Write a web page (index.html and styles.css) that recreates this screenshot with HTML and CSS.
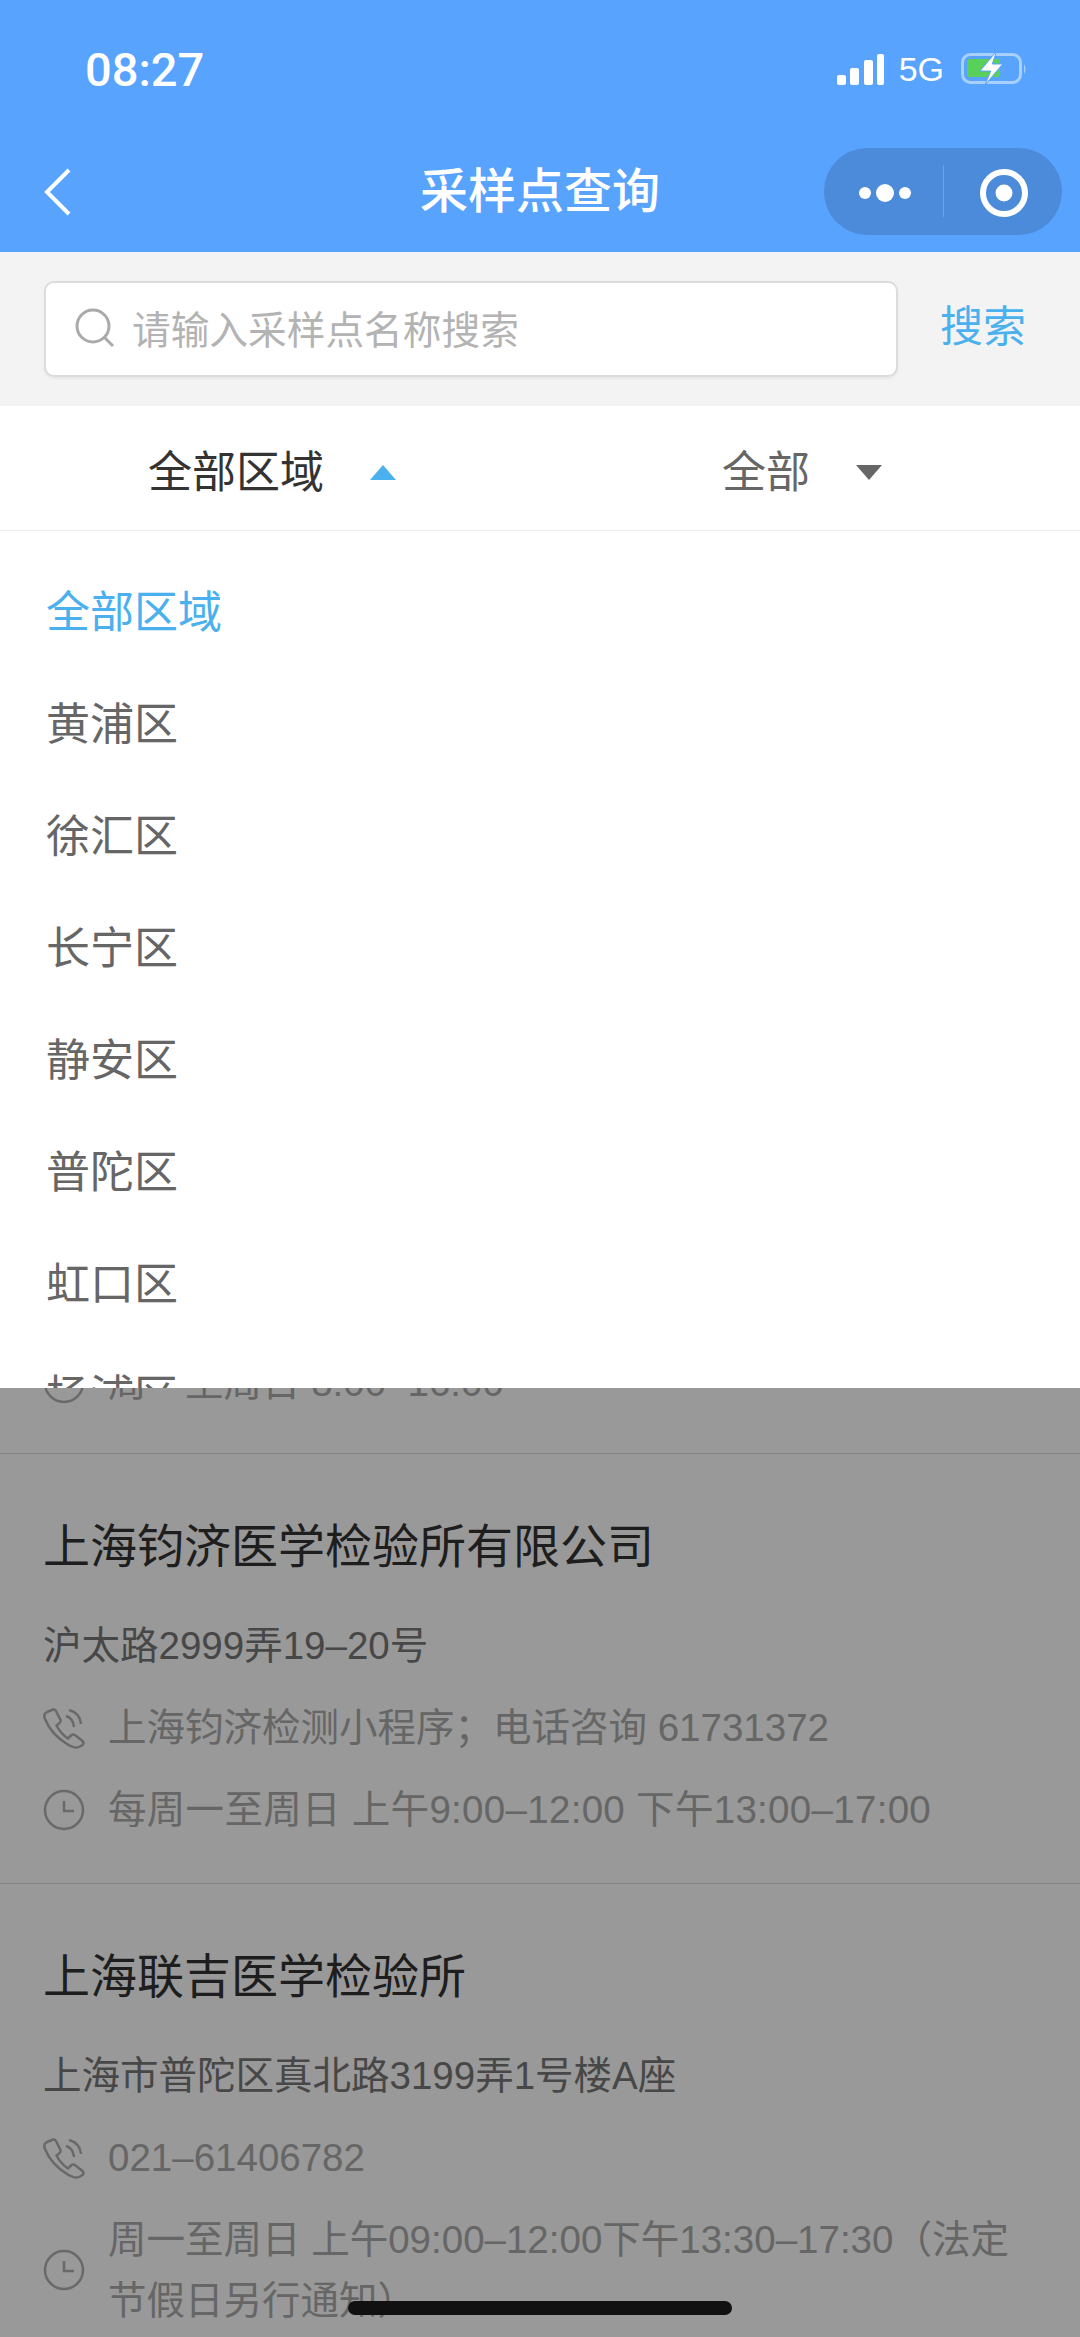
FILE: index.html
```html
<!DOCTYPE html>
<html lang="zh-CN">
<head>
  <meta charset="UTF-8">
  <meta name="viewport" content="width=device-width,initial-scale=1">
  <title>采样点查询</title>
  <link rel="stylesheet" href="styles.css">
</head>
<body>
  <div class="app">
    <header class="top">
      <div class="status">
        <span class="time">08:27</span>
        <div class="status-right">
          <svg class="signal" width="47" height="31" viewBox="0 0 47 31">
            <rect x="0" y="21" width="9" height="10" rx="2"/>
            <rect x="13" y="14" width="9" height="17" rx="2"/>
            <rect x="27" y="6" width="9" height="25" rx="2"/>
            <rect x="40" y="0" width="7" height="31" rx="2"/>
          </svg>
          <span class="net">5G</span>
          <svg class="battery" width="70" height="36" viewBox="0 0 70 36">
            <rect x="4.5" y="3.5" width="58" height="28" rx="8" fill="none" stroke="#a9cffc" stroke-width="3"/>
            <rect x="9" y="8" width="33" height="18" rx="2" fill="#58d05a"/>
            <path d="M66 13 Q69 18 66 23 Z" fill="#a9cffc"/>
            <path d="M38.7 0 L22 20 H32.7 L27 34 L44.7 13 H34.3 Z" fill="#fff" stroke="#57a3fd" stroke-width="1"/>
          </svg>
        </div>
      </div>
      <nav class="nav">
        <svg class="back" width="30" height="50" viewBox="0 0 30 50">
          <path d="M26 3 L4 25 L26 47" fill="none" stroke="#fff" stroke-width="4"/>
        </svg>
        <h1 class="nav-title">采样点查询</h1>
        <div class="capsule">
          <svg width="119" height="87" viewBox="0 0 119 87">
            <circle cx="41" cy="45" r="6" fill="#fff"/>
            <circle cx="61" cy="45" r="9" fill="#fff"/>
            <circle cx="81" cy="45" r="6" fill="#fff"/>
          </svg>
          <span class="capsule-line"></span>
          <svg width="118" height="87" viewBox="0 0 118 87">
            <circle cx="60" cy="45" r="21" fill="none" stroke="#fff" stroke-width="6"/>
            <circle cx="60" cy="45" r="8.5" fill="#fff"/>
          </svg>
        </div>
      </nav>
    </header>

    <div class="search">
      <div class="search-box">
        <svg width="42" height="42" viewBox="0 0 42 42">
          <circle cx="18" cy="18" r="16" fill="none" stroke="#aaa" stroke-width="3"/>
          <path d="M29 29 L38 38" stroke="#aaa" stroke-width="3"/>
        </svg>
        <span class="placeholder">请输入采样点名称搜索</span>
      </div>
      <span class="search-btn">搜索</span>
    </div>

    <div class="filter">
      <div class="tab tab-active">全部区域<i class="tri tri-up"></i></div>
      <div class="tab tab-right">全部<i class="tri tri-down"></i></div>
    </div>

    <div class="content">
      <div class="list">
        <section class="card card-tail">
          <div class="row">
            <svg class="icon" width="42" height="42" viewBox="0 0 42 42"><circle cx="21" cy="21" r="19" /><path d="M21 12 V22 H31"/></svg>
            <span>周一至周日 8:00–16:00</span>
          </div>
        </section>
        <section class="card">
          <h2>上海钧济医学检验所有限公司</h2>
          <p class="addr">沪太路2999弄19–20号</p>
          <div class="row">
            <svg class="icon" width="42" height="42" viewBox="0 0 42 42"><path d="M4 5 L10 2.5 Q12 2 13 4 L17.5 13 Q18 15 16 16.5 L13.5 18.5 Q18 27 25 31.5 L28 28.5 Q30 27 32 28 L39.5 34 Q41.5 36 39.5 38 L36 40 Q32 42 24 37 Q8 27 2 12 Q0 7 4 5 Z"/><path d="M23 9 Q30 11 31 20"/><path d="M26 3 Q37 6 38 17"/></svg>
            <span>上海钧济检测小程序；电话咨询 61731372</span>
          </div>
          <div class="row">
            <svg class="icon" width="42" height="42" viewBox="0 0 42 42"><circle cx="21" cy="21" r="19" /><path d="M21 12 V22 H31"/></svg>
            <span class="wide">每周一至周日 上午9:00–12:00 下午13:00–17:00</span>
          </div>
        </section>
        <section class="card">
          <h2>上海联吉医学检验所</h2>
          <p class="addr">上海市普陀区真北路3199弄1号楼A座</p>
          <div class="row">
            <svg class="icon" width="42" height="42" viewBox="0 0 42 42"><path d="M4 5 L10 2.5 Q12 2 13 4 L17.5 13 Q18 15 16 16.5 L13.5 18.5 Q18 27 25 31.5 L28 28.5 Q30 27 32 28 L39.5 34 Q41.5 36 39.5 38 L36 40 Q32 42 24 37 Q8 27 2 12 Q0 7 4 5 Z"/><path d="M23 9 Q30 11 31 20"/><path d="M26 3 Q37 6 38 17"/></svg>
            <span>021–61406782</span>
          </div>
          <div class="row">
            <svg class="icon" width="42" height="42" viewBox="0 0 42 42"><circle cx="21" cy="21" r="19" /><path d="M21 12 V22 H31"/></svg>
            <span>周一至周日 上午09:00–12:00下午13:30–17:30（法定节假日另行通知）</span>
          </div>
        </section>
      </div>

      <div class="mask"></div>

      <ul class="menu">
        <li class="menu-on">全部区域</li>
        <li>黄浦区</li>
        <li>徐汇区</li>
        <li>长宁区</li>
        <li>静安区</li>
        <li>普陀区</li>
        <li>虹口区</li>
        <li>杨浦区</li>
      </ul>
    </div>

    <div class="home-bar"></div>
  </div>
</body>
</html>
```

FILE: styles.css
```css
* { box-sizing: border-box; }
html, body { margin: 0; padding: 0; }
body { background: #fff; color: #333; font-family: "Liberation Sans", "Noto Sans CJK SC", sans-serif; }
.app { position: relative; width: 1080px; height: 2337px; display: flex; flex-direction: column; overflow: hidden; }

/* blue header */
.top { background: #57a3fd; color: #fff; height: 252px; flex: none; }
.status { height: 140px; padding: 0 52px 2px 85px; display: flex; align-items: center; justify-content: space-between; }
.time { font-family: Roboto, sans-serif; font-weight: 500; font-size: 47px; }
.status-right { display: flex; align-items: center; }
.signal { fill: #fff; margin-right: 15px; }
.net { font-size: 34px; margin-right: 14px; }
.nav { height: 112px; display: grid; grid-template-columns: 1fr auto 1fr; align-items: center; padding: 0 18px; }
.back { display: block; margin: 0 0 8px 25px; }
.nav-title { margin: 0 0 8px; font-size: 48px; font-weight: 500; line-height: 60px; }
.capsule { justify-self: end; width: 238px; height: 87px; margin-bottom: 10px; border-radius: 44px; background: #4b8bd9; display: flex; align-items: center; }
.capsule svg { display: block; flex: none; }
.capsule-line { width: 1px; height: 52px; background: rgba(255,255,255,0.2); flex: none; }

/* search */
.search { height: 154px; flex: none; background: #f3f3f3; padding: 29px 37px 0 44px; display: flex; }
.search-box { width: 854px; height: 96px; background: #fff; border: 2px solid #dcdcdc; border-radius: 10px; box-shadow: 0 2px 3px rgba(0,0,0,0.05); padding: 3px 0 0 29px; display: flex; align-items: center; gap: 15px; }
.search-box svg { margin-top: -3px; }
.placeholder { color: #b3b3b3; font-size: 38.7px; line-height: 50px; }
.search-btn { margin-left: 42px; color: #4ab0ee; font-size: 43px; line-height: 93px; }

/* filter tabs */
.filter { height: 125px; flex: none; display: flex; background: #fff; border-bottom: 1px solid #eee; }
.tab { width: 50%; padding-top: 2px; display: flex; align-items: center; justify-content: center; font-size: 44px; color: #666; }
.tab-active { color: #333; padding-left: 4px; }
.tab-right { padding-right: 16px; }
.tri { display: block; width: 0; height: 0; margin-left: 46px; margin-top: 6px; border-left: 13px solid transparent; border-right: 13px solid transparent; }
.tri-up { border-bottom: 15px solid #4ab0ee; }
.tri-down { border-top: 15px solid #666; }

/* list behind the mask */
.content { position: relative; flex: 1; overflow: hidden; background: #fff; }
.list { padding-top: 821px; }
.card { padding: 63px 40px 43px 43px; border-bottom: 1px solid #ddd; }
.card-tail { padding-top: 0; padding-bottom: 40px; }
.card h2 { margin: 0; font-size: 47px; font-weight: 400; line-height: 60px; color: #333; }
.addr { margin: 39px 0 0; font-size: 38.5px; line-height: 60px; color: #777; }
.row { display: flex; align-items: center; gap: 23px; margin-top: 21px; font-size: 38.5px; line-height: 61px; color: #aaa; }
.row .wide { letter-spacing: 0.3px; }
.card-tail .row { margin-top: 0; }
.icon { flex: none; fill: none; stroke: #b0b0b0; stroke-width: 2.5; }

.mask { position: absolute; top: 0; left: 0; right: 0; bottom: 0; background: rgba(0,0,0,0.4); }

/* area dropdown */
.menu { position: absolute; top: 0; left: 0; right: 0; height: 857px; margin: 0; padding: 26px 46px 0; list-style: none; overflow: hidden; background: #fff; }
.menu li { font-size: 44px; line-height: 112px; color: #666; }
.menu .menu-on { color: #4ab0ee; }

.home-bar { position: absolute; left: 348px; top: 2301px; width: 384px; height: 14px; border-radius: 7px; background: #111; }
```
